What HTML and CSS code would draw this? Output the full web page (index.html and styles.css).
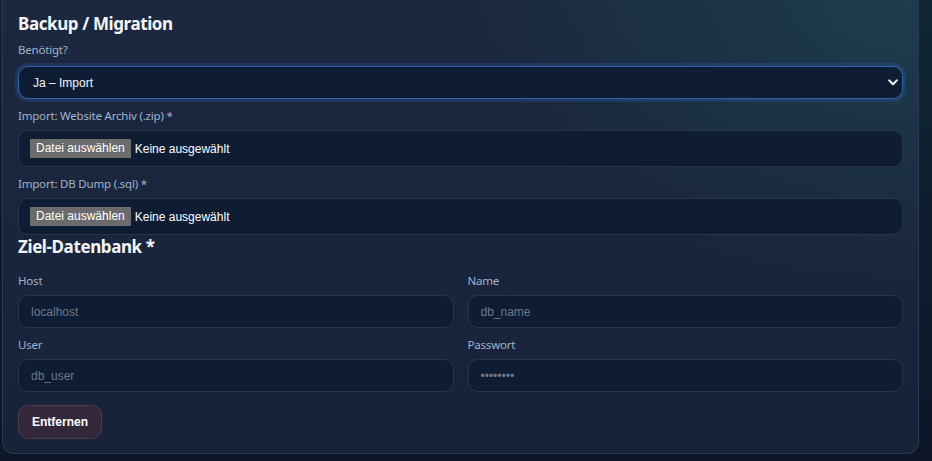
FILE: index.html
```html
<!DOCTYPE html>
<html lang="de">
<head>
  <meta charset="UTF-8" />
  <meta name="viewport" content="width=device-width, initial-scale=1.0" />
  <title>Backup / Migration</title>
  <link rel="stylesheet" href="styles.css">
</head>
<body>
  <div class="card">
    <h2>Backup / Migration</h2>

    <div class="field">
      <label class="lbl-top">Benötigt?</label>
      <div class="select-wrap">
        <select class="ctrl select-focus">
          <option>Nein</option>
          <option selected>Ja – Import</option>
        </select>
        <svg class="chev" width="10" height="7" viewBox="0 0 10 7"><path d="M1.2 1.4 5 5.2 8.8 1.4" fill="none" stroke="#fff" stroke-width="2" stroke-linecap="round" stroke-linejoin="round"/></svg>
      </div>
    </div>

    <div class="field">
      <label>Import: Website Archiv (.zip) *</label>
      <label class="ctrl file">
        <input type="file" accept=".zip">
        <span class="file-btn">Datei auswählen</span>
        <span class="file-name">Keine ausgewählt</span>
      </label>
    </div>

    <div class="field last">
      <label>Import: DB Dump (.sql) *</label>
      <label class="ctrl file">
        <input type="file" accept=".sql">
        <span class="file-btn">Datei auswählen</span>
        <span class="file-name">Keine ausgewählt</span>
      </label>
    </div>

    <h2 class="sub">Ziel-Datenbank *</h2>
    <div class="grid">
      <div><label>Host</label><input type="text" class="ctrl" placeholder="localhost"></div>
      <div><label>Name</label><input type="text" class="ctrl" placeholder="db_name"></div>
      <div><label>User</label><input type="text" class="ctrl" placeholder="db_user"></div>
      <div><label>Passwort</label><input type="password" class="ctrl" placeholder="••••••••"></div>
    </div>

    <button class="btn">Entfernen</button>
  </div>
</body>
</html>
```

FILE: styles.css
```css
html, body { margin: 0; height: 100%; }
body {
  font-family: "Noto Sans", "Open Sans", sans-serif;
  background: linear-gradient(180deg, #0f2733 0%, #0e1b2c 60%, #0d1626 100%);
  padding: 0 13px 0 2px;
  box-sizing: border-box;
  overflow: hidden;
  color-scheme: dark;
}
.card {
  background:
    radial-gradient(ellipse 70% 90% at 100% 0%, rgba(30, 68, 82, 0.75), rgba(30, 68, 82, 0) 70%),
    linear-gradient(180deg, #1b2840 0%, #18233a 100%);
  border: 1px solid #2c3a50;
  border-top: none;
  border-radius: 0 0 12px 12px;
  padding: 12px 15px 14px 15px;
  height: 454px;
  box-sizing: border-box;
}
h2 {
  margin: 0 0 6px 0;
  font-size: 17px;
  line-height: 24px;
  font-weight: 700;
  letter-spacing: -0.4px;
  color: #f4f7fb;
}
h2.sub { margin: 0 0 14px 0; }
label {
  display: block;
  font-size: 11.5px;
  line-height: 16px;
  letter-spacing: -0.2px;
  color: #a0b3cc;
  margin-bottom: 6px;
}
.lbl-top { margin-bottom: 8px; }
.field { margin-bottom: 9px; }
.field.last { margin-bottom: 0; }

.ctrl {
  display: block;
  width: 100%;
  box-sizing: border-box;
  height: 33px;
  padding: 0 12px;
  margin: 0;
  background: #0e1d34;
  border: 1px solid #26354c;
  border-radius: 10px;
  color: #f2f5fa;
  font-family: "Liberation Sans", Arial, sans-serif;
  font-size: 12px;
  letter-spacing: 0;
  outline: none;
}
.ctrl::placeholder { color: #6d7889; }
.select-wrap { position: relative; }
select.ctrl {
  appearance: none;
  -webkit-appearance: none;
  padding-left: 14px;
}
.select-focus {
  border-color: #2f62ad;
  box-shadow: 0 0 0 3px rgba(47, 98, 173, 0.28);
}
.chev { position: absolute; right: 5px; top: 13px; pointer-events: none; }

.file {
  display: flex;
  align-items: center;
  gap: 4px;
  height: 37px;
  padding: 0 11px;
  color: #fff;
  cursor: pointer;
}
.file input { display: none; }
.file-btn {
  background: #6b6b6b;
  color: #fff;
  padding: 2px 6px;
  line-height: 15px;
}

.grid {
  display: grid;
  grid-template-columns: 1fr 1fr;
  column-gap: 14px;
  row-gap: 9px;
  margin-bottom: 13px;
}
.grid label { margin-bottom: 6px; }
.btn {
  height: 34px;
  padding: 0 13px;
  background: #33283a;
  border: 1px solid #4a3b4f;
  border-radius: 10px;
  color: #fff;
  font-family: "Liberation Sans", Arial, sans-serif;
  font-size: 12px;
  font-weight: 700;
  cursor: pointer;
}
```
